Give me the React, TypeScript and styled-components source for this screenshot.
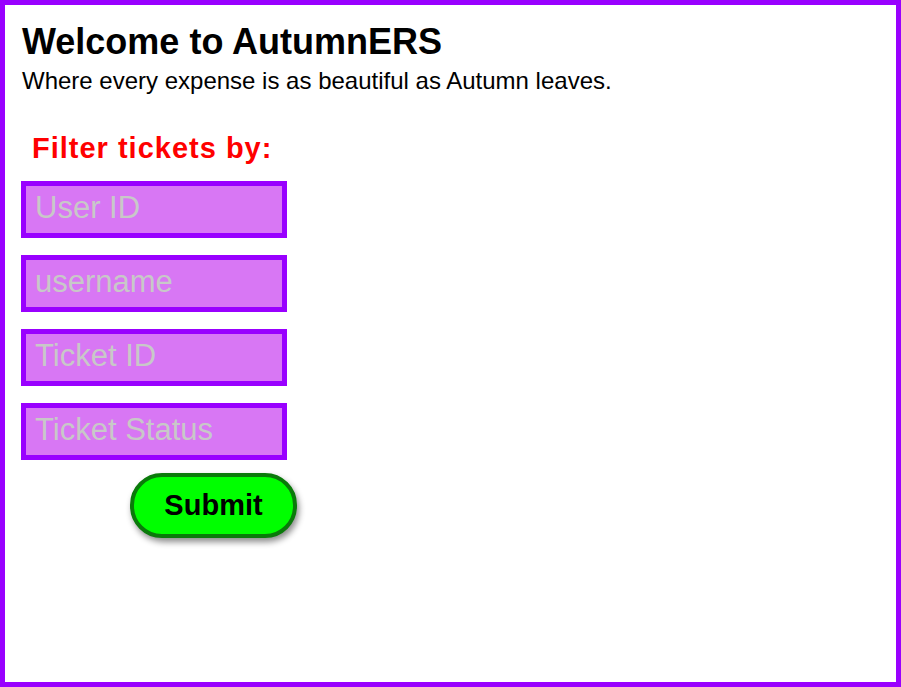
import React from 'react'
import styled, { createGlobalStyle } from 'styled-components'

const GlobalStyle = createGlobalStyle`
  html, body {
    margin: 0;
    padding: 0;
    background: #ffffff;
  }
  * {
    box-sizing: border-box;
  }
`

const Page = styled.div`
  height: 687px;
  border: 5px solid #9900ff;
  padding: 16px 16px;
  font-family: 'Liberation Sans', Arial, sans-serif;
  color: #000;
`

const Title = styled.h1`
  margin: 0 0 0 1px;
  font-size: 36px;
  line-height: 42px;
  font-weight: bold;
`

const Tagline = styled.p`
  margin: 3px 0 0 1px;
  font-size: 24px;
  line-height: 30px;
`

const FilterForm = styled.form`
  display: flex;
  flex-direction: column;
  align-items: flex-start;
  margin-top: 35px;
`

const FilterLabel = styled.h2`
  margin: 0 0 16px 11px;
  font-size: 29px;
  line-height: 34px;
  font-weight: bold;
  letter-spacing: 1px;
  color: #ff0000;
`

const Fields = styled.div`
  display: flex;
  flex-direction: column;
  gap: 17px;
`

const Field = styled.input`
  width: 266px;
  height: 57px;
  border: 5px solid #9900ff;
  background: #d877f4;
  padding: 0 9px 3px 9px;
  font-family: 'Liberation Sans', Arial, sans-serif;
  font-size: 31px;
  color: #333;
  outline: none;

  &::placeholder {
    color: #c8c8c8;
  }
`

const SubmitButton = styled.button`
  margin: 13px 0 0 109px;
  width: 167px;
  height: 65px;
  border: 4px solid #0a7a0a;
  border-radius: 32px;
  background: #00ff00;
  font-family: 'Liberation Sans', Arial, sans-serif;
  font-size: 29px;
  font-weight: bold;
  color: #000;
  box-shadow: 2px 4px 6px rgba(0, 0, 0, 0.45);
  cursor: pointer;
`

const fields = ['User ID', 'username', 'Ticket ID', 'Ticket Status']

export default function App() {
  return (
    <>
      <GlobalStyle />
      <Page>
        <Title>Welcome to AutumnERS</Title>
        <Tagline>Where every expense is as beautiful as Autumn leaves.</Tagline>
        <FilterForm onSubmit={(e) => e.preventDefault()}>
          <FilterLabel>Filter tickets by:</FilterLabel>
          <Fields>
            {fields.map((f) => (
              <Field key={f} type="text" placeholder={f} />
            ))}
          </Fields>
          <SubmitButton type="submit">Submit</SubmitButton>
        </FilterForm>
      </Page>
    </>
  )
}
